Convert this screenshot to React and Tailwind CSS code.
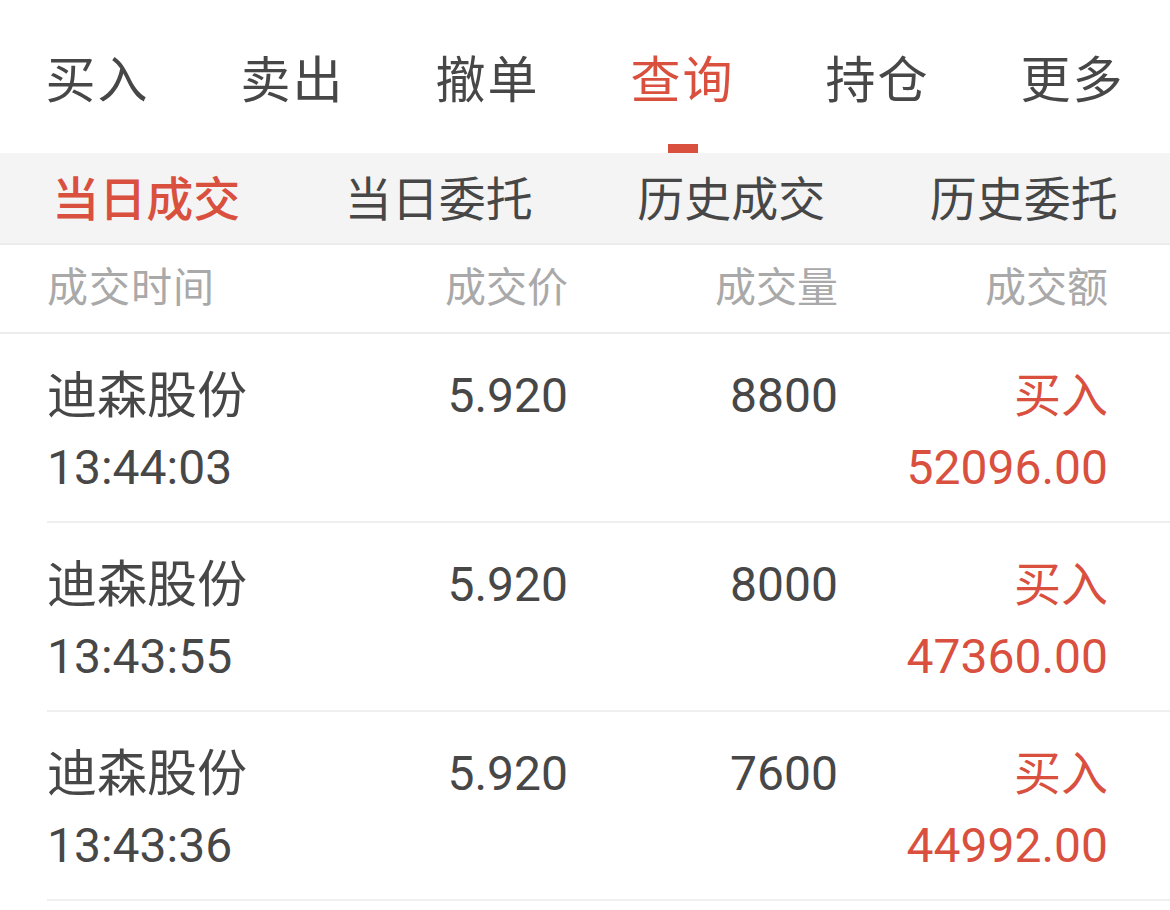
import React, { useState } from "react";

const topTabs = ["买入", "卖出", "撤单", "查询", "持仓", "更多"];
const subTabs = ["当日成交", "当日委托", "历史成交", "历史委托"];

const trades = [
  { name: "迪森股份", time: "13:44:03", price: "5.920", qty: "8800", side: "买入", amount: "52096.00" },
  { name: "迪森股份", time: "13:43:55", price: "5.920", qty: "8000", side: "买入", amount: "47360.00" },
  { name: "迪森股份", time: "13:43:36", price: "5.920", qty: "7600", side: "买入", amount: "44992.00" },
];

const font = { fontFamily: "Roboto, 'Noto Sans CJK SC', sans-serif" };

const App = () => {
  const [tab, setTab] = useState(3);
  const [sub, setSub] = useState(0);

  return (
    <div className="w-[1170px] h-[910px] bg-white overflow-hidden text-[#474747]" style={font}>
      {/* top tabs */}
      <div className="flex h-[153px]">
        {topTabs.map((t, i) => (
          <button
            key={t}
            onClick={() => setTab(i)}
            className="flex-1 flex flex-col items-center"
          >
            <span
              className={
                "mt-[51px] text-[50px] leading-[60px] tracking-[2px] " +
                (i === tab ? "text-[#d9503f]" : "text-[#474747]")
              }
            >
              {t}
            </span>
            <span
              className={
                "mt-[33px] w-[30px] h-[9px] " + (i === tab ? "bg-[#d9503f]" : "bg-transparent")
              }
            />
          </button>
        ))}
      </div>

      {/* sub tabs */}
      <div className="flex h-[92px] bg-[#f4f4f4] border-b-2 border-[#ebebeb]">
        {subTabs.map((t, i) => (
          <button
            key={t}
            onClick={() => setSub(i)}
            className={
              "flex-1 flex items-center justify-center pt-[4px] text-[47px] " +
              (i === sub ? "text-[#d9503f] font-medium" : "text-[#474747]")
            }
          >
            {t}
          </button>
        ))}
      </div>

      {/* header */}
      <div className="grid grid-cols-[251px_270px_270px_270px] pl-[47px] h-[89px] items-center border-b-2 border-[#ececec] text-[41px] text-[#a9a9a9]">
        <div className="tracking-[1px]">成交时间</div>
        <div className="text-right">成交价</div>
        <div className="text-right">成交量</div>
        <div className="text-right">成交额</div>
      </div>

      {/* rows */}
      <div className="pl-[47px]">
        {trades.map((r, i) => (
          <div
            key={i}
            className="grid grid-cols-[251px_270px_270px_270px] h-[189px] pt-[26px] border-b-2 border-[#efefef] text-[48px] leading-[72px]"
          >
            <div className="flex flex-col">
              <span className="text-[50px]">{r.name}</span>
              <span>{r.time}</span>
            </div>
            <div className="text-right">{r.price}</div>
            <div className="text-right">{r.qty}</div>
            <div className="flex flex-col items-end text-[#d9503f]">
              <span className="text-[47px]">{r.side}</span>
              <span>{r.amount}</span>
            </div>
          </div>
        ))}
      </div>
    </div>
  );
};

export default App;
